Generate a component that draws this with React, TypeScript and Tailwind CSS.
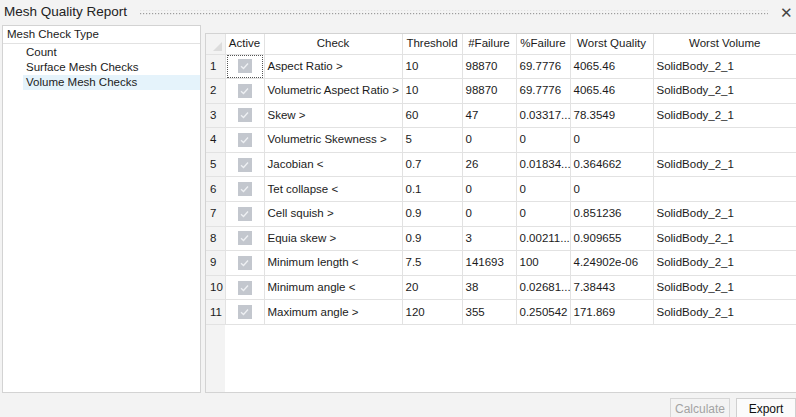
import React from 'react'

type Row = {
  check: string;
  threshold: string;
  failures: string;
  pct: string;
  worst: string;
  volume: string;
};

const rows: Row[] = [
  { check: 'Aspect Ratio >', threshold: '10', failures: '98870', pct: '69.7776', worst: '4065.46', volume: 'SolidBody_2_1' },
  { check: 'Volumetric Aspect Ratio >', threshold: '10', failures: '98870', pct: '69.7776', worst: '4065.46', volume: 'SolidBody_2_1' },
  { check: 'Skew >', threshold: '60', failures: '47', pct: '0.03317...', worst: '78.3549', volume: 'SolidBody_2_1' },
  { check: 'Volumetric Skewness >', threshold: '5', failures: '0', pct: '0', worst: '0', volume: '' },
  { check: 'Jacobian <', threshold: '0.7', failures: '26', pct: '0.01834...', worst: '0.364662', volume: 'SolidBody_2_1' },
  { check: 'Tet collapse <', threshold: '0.1', failures: '0', pct: '0', worst: '0', volume: '' },
  { check: 'Cell squish >', threshold: '0.9', failures: '0', pct: '0', worst: '0.851236', volume: 'SolidBody_2_1' },
  { check: 'Equia skew >', threshold: '0.9', failures: '3', pct: '0.00211...', worst: '0.909655', volume: 'SolidBody_2_1' },
  { check: 'Minimum length <', threshold: '7.5', failures: '141693', pct: '100', worst: '4.24902e-06', volume: 'SolidBody_2_1' },
  { check: 'Minimum angle <', threshold: '20', failures: '38', pct: '0.02681...', worst: '7.38443', volume: 'SolidBody_2_1' },
  { check: 'Maximum angle >', threshold: '120', failures: '355', pct: '0.250542', worst: '171.869', volume: 'SolidBody_2_1' },
]

const headers = ['Active', 'Check', 'Threshold', '#Failure', '%Failure', 'Worst Quality', 'Worst Volume']

function CheckBox() {
  return (
    <div className="w-[14px] h-[14px] bg-[#c3c7ce] flex items-center justify-center">
      <svg width="9" height="8" viewBox="0 0 9 8">
        <path d="M1 4.2 L3.5 6.5 L8 1.5" fill="none" stroke="#eef0f3" strokeWidth="1.3" />
      </svg>
    </div>
  )
}

function Grip() {
  return (
    <svg className="w-full h-[8px] block">
      <defs>
        <pattern id="grip" width="3" height="4" patternUnits="userSpaceOnUse">
          <rect x="0" y="0" width="1.2" height="1.2" fill="#9c9c9c" />
        </pattern>
      </defs>
      <rect x="0" y="1" width="100%" height="6" fill="url(#grip)" />
    </svg>
  )
}

export default function App() {
  return (
    <div className="w-[796px] h-[417px] overflow-hidden bg-[#f3f3f3] text-[#1b1b1b] font-['Liberation_Sans',Arial,sans-serif] text-[11.5px]">
      {/* title bar */}
      <div className="h-[25px] flex items-center pl-[4px] pr-[3px]">
        <div className="text-[13.5px] text-[#222] whitespace-nowrap">Mesh Quality Report</div>
        <div className="flex-1 ml-[13px] mr-[12px] pt-[1px]">
          <Grip />
        </div>
        <div className="text-[15px] text-[#444] leading-none pb-[1px]">✕</div>
      </div>

      <div className="flex">
        {/* left tree */}
        <div className="ml-[2px] w-[199px] h-[368px] bg-white border border-[#d3d3d3]">
          <div className="h-[18px] border-b border-[#e2e2e2] pl-[4px] flex items-center">Mesh Check Type</div>
          <div className="pt-[1px]">
            <div className="h-[15px] pl-[23px] flex items-center">Count</div>
            <div className="h-[15px] pl-[23px] flex items-center">Surface Mesh Checks</div>
            <div className="h-[15px] ml-[20px] pl-[3px] flex items-center bg-[#e5f3fb]">Volume Mesh Checks</div>
          </div>
        </div>

        {/* table */}
        <div className="ml-[4px] mt-[8px] flex-1 h-[360px] bg-white border border-[#d3d3d3] border-r-0 relative">
          <div className="absolute left-0 top-0 bottom-0 w-[19px] bg-[#f3f3f3]" />
          <table className="relative table-fixed border-collapse w-full">
            <colgroup>
              <col className="w-[19px]" />
              <col className="w-[39px]" />
              <col className="w-[138px]" />
              <col className="w-[60px]" />
              <col className="w-[54px]" />
              <col className="w-[54px]" />
              <col className="w-[83px]" />
              <col />
            </colgroup>
            <thead>
              <tr className="h-[20px]">
                <th className="bg-[#f3f3f3] border-r border-b border-[#e2e2e2] p-0 relative">
                  <svg className="absolute right-[3px] bottom-[3px]" width="9" height="9" viewBox="0 0 9 9">
                    <polygon points="9,0 9,9 0,9" fill="#dcdcdc" />
                  </svg>
                </th>
                {headers.map((h) => (
                  <th key={h} className="font-normal text-center border-r border-b border-[#e2e2e2] p-0 whitespace-nowrap last:border-r-0">{h}</th>
                ))}
              </tr>
            </thead>
            <tbody>
              {rows.map((r, i) => (
                <tr key={i} className="h-[24.6px]">
                  <td className="bg-[#f3f3f3] border-r border-b border-[#e2e2e2] pl-[4px] p-0">{i + 1}</td>
                  <td className="border-r border-b border-[#e2e2e2] p-0">
                    <div className={i === 0 ? 'h-[23px] mx-[1px] border border-dotted border-[#555] flex items-center justify-center' : 'flex items-center justify-center'}>
                      <CheckBox />
                    </div>
                  </td>
                  <td className="border-r border-b border-[#e2e2e2] pl-[3px] p-0 whitespace-nowrap overflow-hidden">{r.check}</td>
                  <td className="border-r border-b border-[#e2e2e2] pl-[3px] p-0">{r.threshold}</td>
                  <td className="border-r border-b border-[#e2e2e2] pl-[3px] p-0">{r.failures}</td>
                  <td className="border-r border-b border-[#e2e2e2] pl-[3px] p-0 whitespace-nowrap">{r.pct}</td>
                  <td className="border-r border-b border-[#e2e2e2] pl-[3px] p-0 whitespace-nowrap">{r.worst}</td>
                  <td className="border-b border-[#e2e2e2] pl-[3px] p-0 whitespace-nowrap">{r.volume}</td>
                </tr>
              ))}
            </tbody>
          </table>
        </div>
      </div>

      {/* buttons */}
      <div className="flex justify-end gap-[6px] mt-[5px]">
        <button className="w-[60px] h-[22px] border border-[#d6d6d6] bg-[#f3f3f3] text-[#a3a3a3] text-[12px]">Calculate</button>
        <button className="w-[60px] h-[22px] border border-[#d0d0d0] bg-[#fbfbfb] text-[#111] text-[12px]">Export</button>
      </div>
    </div>
  )
}
